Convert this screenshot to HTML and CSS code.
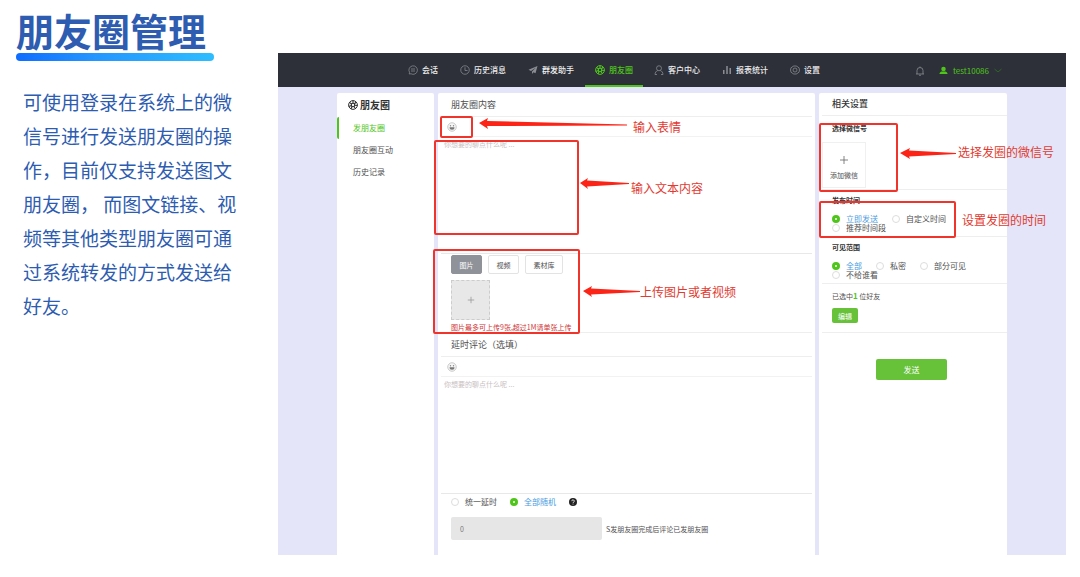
FILE: index.html
```html
<!DOCTYPE html>
<html lang="zh-CN">
<head>
<meta charset="utf-8">
<title>朋友圈管理</title>
<link rel="stylesheet" href="styles.css">
</head>
<body>
<svg class="defs" aria-hidden="true">
  <symbol id="aperture" viewBox="0 0 20 20">
    <circle cx="10" cy="10" r="8.800" fill="none" stroke="currentColor" stroke-width="2"/>
    <circle cx="10" cy="10" r="3.500" fill="none" stroke="currentColor" stroke-width="2.400"/>
    <path d="M10 1v6M16.500 4l-4 4M19 11l-6-.5M15 17.500l-3-4.500M6 18l2-5M1.500 13l5.500-2M3 5l4.500 3" stroke="currentColor" stroke-width="2.200"/>
  </symbol>
  <symbol id="smile" viewBox="0 0 20 20">
    <circle cx="10" cy="10" r="8.500" fill="#f6f6f6" stroke="#bbb" stroke-width="1.500"/>
    <circle cx="7" cy="7.500" r="1.400" fill="#888"/><circle cx="13" cy="7.500" r="1.400" fill="#888"/>
    <path d="M5 10.500h10a5 5 0 0 1-10 0z" fill="#777"/>
  </symbol>
</svg>
<div class="page">
  <section class="intro">
    <h1>朋友圈管理</h1>
    <p>可使用登录在系统上的微信号进行发送朋友圈的操作，目前仅支持发送图文朋友圈， 而图文链接、视频等其他类型朋友圈可通过系统转发的方式发送给好友。</p>
  </section>

  <div class="app">
    <header class="topbar">
      <nav class="nav">
        <a href="#"><svg class="icon" viewBox="0 0 20 20"><path d="M2.500 18l.5-3.500A8.500 8.500 0 1 1 6 17.500zM6 8h8M6 12h8" fill="none" stroke="currentColor" stroke-width="1.500"/></svg>会话</a>
        <a href="#"><svg class="icon" viewBox="0 0 20 20"><circle cx="10" cy="10" r="8.500" fill="none" stroke="currentColor" stroke-width="1.500"/><path d="M10 4.500V11h5" fill="none" stroke="currentColor" stroke-width="1.500"/></svg>历史消息</a>
        <a href="#"><svg class="icon" viewBox="0 0 20 20"><path d="M19 2L1 9.500l5 2.500L16 5l-8 8v5l3-3.500 4 2z" fill="currentColor"/></svg>群发助手</a>
        <a href="#" class="active"><svg class="icon"><use href="#aperture"/></svg>朋友圈</a>
        <a href="#"><svg class="icon" viewBox="0 0 20 20"><circle cx="10" cy="6.500" r="5" fill="none" stroke="currentColor" stroke-width="1.500"/><path d="M2 19c0-4 2.500-7 5.500-8M18 19c0-4-2.500-7-5.500-8M2 19h4M14 19h4" fill="none" stroke="currentColor" stroke-width="1.500"/></svg>客户中心</a>
        <a href="#"><svg class="icon" viewBox="0 0 20 20"><path d="M2 10h3v8H2zM8.500 2h3v16h-3zM15 6h3v12h-3z" fill="currentColor"/></svg>报表统计</a>
        <a href="#"><svg class="icon" viewBox="0 0 20 20"><path d="M6.500 2h7l1.500 2 3 1.500 1 4.500-1 4.500-3 1.500-1.500 2h-7L5 16l-3-1.500L1 10l1-4.500L5 4z" fill="none" stroke="currentColor" stroke-width="1.500"/><circle cx="10" cy="10" r="4" fill="none" stroke="currentColor" stroke-width="1.500"/></svg>设置</a>
      </nav>
      <div class="account">
        <svg class="icon" viewBox="0 0 20 20"><path d="M2 16h16M4 16V9a6 6 0 0 1 12 0v7M10 1v2M8 18.500h4" fill="none" stroke="currentColor" stroke-width="1.600"/></svg>
        <button class="user" type="button">
          <svg class="icon person" viewBox="0 0 20 20"><circle cx="10" cy="6.500" r="5" fill="currentColor"/><path d="M1 18c0-4 3-6 5-6h8c2 0 5 2 5 6z" fill="currentColor"/></svg>
          <span>test10086</span>
          <svg class="chevron" viewBox="0 0 16 10"><path d="M1 2l7 6 7-6" fill="none" stroke="currentColor" stroke-width="1.500"/></svg>
        </button>
      </div>
    </header>

    <div class="columns">
      <aside class="side">
        <h2><svg class="icon"><use href="#aperture"/></svg>朋友圈</h2>
        <a href="#" class="current">发朋友圈</a>
        <a href="#">朋友圈互动</a>
        <a href="#">历史记录</a>
      </aside>

      <main class="editor">
        <h3>朋友圈内容</h3>
        <div class="tools"><button type="button" aria-label="表情"><svg class="icon"><use href="#smile"/></svg></button></div>
        <textarea aria-label="朋友圈内容" placeholder="你想要的聊点什么呢 ..."></textarea>
        <div class="upload">
          <div class="tabs">
            <button type="button" class="on">图片</button>
            <button type="button">视频</button>
            <button type="button">素材库</button>
          </div>
          <button type="button" class="drop" aria-label="上传"><svg viewBox="0 0 10 10"><path d="M5 1v8M1 5h8" stroke="currentColor"/></svg></button>
          <p>图片最多可上传9张,超过1M请单张上传</p>
        </div>
        <h3>延时评论（选填）</h3>
        <div class="tools"><button type="button" aria-label="表情"><svg class="icon"><use href="#smile"/></svg></button></div>
        <textarea class="comment" aria-label="延时评论" placeholder="你想要的聊点什么呢 ..."></textarea>
        <div class="delay">
          <label class="radio"><input type="radio" name="delay"><span>统一延时</span></label>
          <label class="radio"><input type="radio" name="delay" checked><span>全部随机</span></label>
          <svg class="help" viewBox="0 0 16 16"><circle cx="8" cy="8" r="8" fill="#222"/><path d="M5.500 6.300a2.500 2.500 0 1 1 3.600 2.200C8.200 9 8 9.400 8 10M8 11.300v1.700" fill="none" stroke="#fff" stroke-width="1.700"/></svg>
        </div>
        <div class="seconds">
          <input id="sec" type="text" value="0" disabled>
          <label for="sec">S发朋友圈完成后评论已发朋友圈</label>
        </div>
      </main>

      <section class="settings">
        <h3>相关设置</h3>
        <div class="block accounts">
          <h4>选择微信号</h4>
          <button type="button" class="add"><svg viewBox="0 0 10 10"><path d="M5 0v10M0 5h10" stroke="currentColor"/></svg>添加微信</button>
        </div>
        <div class="block">
          <h4>发布时间</h4>
          <div class="options">
            <label class="radio"><input type="radio" name="time" checked><span>立即发送</span></label>
            <label class="radio"><input type="radio" name="time"><span>自定义时间</span></label>
            <label class="radio"><input type="radio" name="time"><span>推荐时间段</span></label>
          </div>
        </div>
        <div class="block">
          <h4>可见范围</h4>
          <div class="options">
            <label class="radio"><input type="radio" name="scope" checked><span>全部</span></label>
            <label class="radio"><input type="radio" name="scope"><span>私密</span></label>
            <label class="radio"><input type="radio" name="scope"><span>部分可见</span></label>
            <label class="radio"><input type="radio" name="scope"><span>不给谁看</span></label>
          </div>
        </div>
        <div class="block friends">
          <p>已选中<b>1</b> 位好友</p>
          <button type="button" class="edit">编辑</button>
        </div>
        <button type="button" class="send">发送</button>
      </section>
    </div>

    <svg class="marks" width="788" height="502" viewBox="0 0 788 502" aria-hidden="true">
      <g fill="none" stroke="#f0342c" stroke-width="2">
        <rect x="163" y="64" width="31" height="20" rx="1"/>
        <rect x="157" y="88" width="143" height="93" rx="1"/>
        <rect x="156" y="197" width="145" height="83" rx="1"/>
        <rect x="542" y="71" width="77" height="67" rx="1"/>
        <rect x="542" y="149" width="135" height="35" rx="1"/>
      </g>
      <g fill="#fb2417">
        <path d="M201 70l9-5-1 3 140 3.500v1L209 73l1 3z"/>
        <path d="M302 130l8-5-1 2.500 42 2.500v1l-42 2.500 1 2.500z"/>
        <path d="M305 238l9-5-1 2.500 49 2.500v1l-49 2.500 1 2.500z"/>
        <path d="M622 100l10-5-1 2.500 47 2.500v1l-47 2.500 1 2.500z"/>
      </g>
    </svg>
    <span class="note note-emoji">输入表情</span>
    <span class="note note-text">输入文本内容</span>
    <span class="note note-upload">上传图片或者视频</span>
    <span class="note note-account">选择发圈的微信号</span>
    <span class="note note-time">设置发圈的时间</span>
  </div>
</div>
</body>
</html>
```
FILE: styles.css
```css
* { box-sizing: border-box; }
body {
  margin: 0;
  background: #fff;
  color: #505050;
  font-family: "Noto Sans CJK SC", sans-serif;
  font-size: 8px;
  line-height: 12px;
}
h1, h2, h3, h4, p { margin: 0; }
a { color: inherit; text-decoration: none; }
button, input, textarea { font: inherit; color: inherit; }
button { padding: 0; border: 0; background: none; }
.defs { position: absolute; width: 0; height: 0; }
.icon { width: 10px; height: 10px; flex: none; }

.page { display: flex; padding-right: 14px; }
.intro { flex: 0 0 278px; padding: 6px 34px 0 16px; color: #2d5cb0; }
.intro h1 {
  width: 198px;
  font-size: 38px;
  line-height: 47px;
  font-weight: 700;
}
.intro h1::after {
  content: "";
  display: block;
  height: 8px;
  border-radius: 4px;
  background: linear-gradient(90deg, #0f6dff, #2496ff 40%, #2dbdff);
}
.intro p { padding: 24px 0 0 7px; font-size: 19px; line-height: 34px; width: 228px; }

.app { position: relative; flex: 1; margin-top: 53px; background: #e4e5f8; }
.topbar {
  display: flex;
  justify-content: space-between;
  height: 34px;
  padding: 0 64px 0 119px;
  background: #2d3039;
}
.nav { display: flex; }
.nav a {
  display: flex;
  align-items: center;
  gap: 4px;
  padding: 2px 11px 0;
  border-bottom: 2px solid transparent;
  color: #eee;
  font-weight: 500;
}
.nav .icon, .account > .icon { color: #8b8d93; }
.nav .active, .nav .active .icon { color: #4fc51b; }
.nav .active { padding: 2px 10px 0; border-color: #4fc51b; }
.account, .user { display: flex; align-items: center; }
.account { gap: 14px; padding-top: 1px; }
.user { gap: 5px; color: #4fc51b; }
.user .person { width: 9px; height: 9px; }
.chevron { width: 8px; height: 5px; color: #2f7a20; }

.columns { display: flex; gap: 4px; padding: 6px 59px 0; }
.side, .editor, .settings { background: #fff; border-radius: 2px 2px 0 0; }
.side { flex: 0 0 97px; display: flex; flex-direction: column; }
.side h2 {
  display: flex;
  align-items: center;
  gap: 2px;
  padding: 5px 0 5px 11px;
  font-size: 10px;
  line-height: 14px;
  color: #333;
}
.side a { padding: 5px 0 5px 14px; border-left: 2px solid transparent; }
.side .current { border-color: #4fc51b; border-radius: 2px; color: #4fc51b; }

.editor { flex: 1; height: 462px; padding: 0 3px; }
.editor h3, .settings h3 {
  padding: 4px 0 4px 10px;
  border-bottom: 1px solid #eee;
  font-size: 9px;
  line-height: 15px;
  font-weight: 400;
}
.tools { display: flex; height: 20px; padding: 5px 6px; border-bottom: 1px solid #f2f2f2; }
.tools button, .tools .icon { display: block; height: 10px; width: 10px; }
textarea {
  display: block;
  width: 100%;
  height: 117px;
  padding: 1px 3px;
  border: 0;
  border-bottom: 1px solid #e8e8e8;
  outline: 0;
  resize: none;
  background: none;
  font-size: 7px;
}
textarea::placeholder { color: #c9c0c2; }
.upload { height: 79px; padding: 1px 10px 0; border-bottom: 1px solid #eee; }
.tabs { display: flex; gap: 6px; margin-bottom: 6px; }
.tabs button {
  width: 31px;
  height: 19px;
  border: 1px solid #e3e3e3;
  border-radius: 2px;
  font-size: 7px;
}
.tabs button:last-child { width: 38px; }
.tabs .on { background: #8f9299; border-color: #8f9299; color: #fff; }
.drop {
  display: grid;
  place-items: center;
  width: 39px;
  height: 40px;
  border: 1px dashed #ccc;
  background: #e8e8e8;
  color: #999;
}
.drop svg { width: 8px; height: 8px; }
.upload p { padding-top: 3px; font-size: 7px; line-height: 9px; color: #d03434; }

.radio { display: flex; align-items: center; gap: 6px; }
.radio input {
  appearance: none;
  flex: none;
  width: 8px;
  height: 8px;
  margin: 0;
  border: 1px solid #ddd;
  border-radius: 50%;
  background: #fff;
}
.radio input:checked { border: 3px solid #4fc51b; }
.radio input:checked + span { color: #4a9be0; }
.delay { display: flex; align-items: center; gap: 13px; padding: 2px 10px 9px; }
.help { width: 8px; height: 8px; }
.seconds { display: flex; align-items: center; gap: 4px; padding: 0 10px; font-size: 7px; }
.seconds input {
  width: 151px;
  height: 23px;
  padding: 0 9px;
  border: 0;
  border-radius: 2px;
  background: #e6e6e6;
  color: #777;
}

.settings { flex: 0 0 188px; padding-left: 3px; display: flex; flex-direction: column; }
.settings h3 { padding-top: 3px; font-weight: 500; color: #333; }
.block { padding: 4px 6px 4px 10px; border-bottom: 1px solid #eee; }
.block h4 { font-size: 7px; line-height: 12px; color: #333; }
.accounts { padding: 6px 0 1px; }
.accounts h4 { padding: 0 0 8px 10px; }
.add {
  display: flex;
  flex-direction: column;
  align-items: center;
  gap: 5px;
  width: 44px;
  height: 46px;
  padding-top: 13px;
  border: 1px solid #f0f0f0;
  font-size: 7px;
}
.add svg { width: 8px; height: 8px; color: #666; }
.options { display: flex; flex-wrap: wrap; gap: 0 14px; padding-top: 8px; line-height: 9px; }
.friends { padding: 6px 10px 9px; font-size: 7px; }
.friends b { color: #4fc51b; font-size: 8px; }
.edit {
  display: block;
  width: 26px;
  height: 15px;
  margin-top: 6px;
  border-radius: 2px;
  background: #67c23a;
  color: #fff;
}
.send {
  align-self: center;
  width: 71px;
  height: 21px;
  margin: 26px 6px 0 0;
  border-radius: 2px;
  background: #67c23a;
  color: #fff;
}

.marks { position: absolute; left: 0; top: 0; }
.note { position: absolute; font-size: 12px; line-height: 16px; color: #e23a30; white-space: nowrap; }
.note-emoji { left: 355px; top: 66px; }
.note-text { left: 353px; top: 127px; }
.note-upload { left: 362px; top: 231px; }
.note-account { left: 680px; top: 91px; }
.note-time { left: 684px; top: 159px; }
```
